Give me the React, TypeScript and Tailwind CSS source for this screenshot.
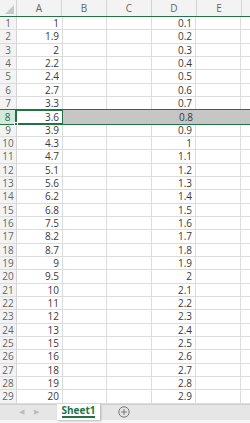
import React from 'react';

const colA = ['1', '1.9', '2', '2.2', '2.4', '2.7', '3.3', '3.6', '3.9', '4.3', '4.7', '5.1', '5.6', '6.2', '6.8', '7.5', '8.2', '8.7', '9', '9.5', '10', '11', '12', '13', '15', '16', '18', '19', '20'];
const colD = ['0.1', '0.2', '0.3', '0.4', '0.5', '0.6', '0.7', '0.8', '0.9', '1', '1.1', '1.2', '1.3', '1.4', '1.5', '1.6', '1.7', '1.8', '1.9', '2', '2.1', '2.2', '2.3', '2.4', '2.5', '2.6', '2.7', '2.8', '2.9'];

const SELECTED = 7;

const App: React.FC = () => {
    return (
        <div className="w-[250px] h-[423px] overflow-hidden bg-white flex flex-col text-[10px] text-[#3a3a3a]" style={{ fontFamily: '"Open Sans", "Liberation Sans", sans-serif' }}>
            {/* column headers */}
            <div className="flex h-[17px] shrink-0 bg-[#f3f3f3] border-b border-[#217346] text-[#666]">
                <div className="w-[17px] shrink-0 border-r border-[#d4d4d4] flex items-end justify-end pr-[2px] pb-[2px]">
                    <svg width="9" height="9" viewBox="0 0 9 9"><polygon points="9,0 9,9 0,9" fill="#c8c8c8" /></svg>
                </div>
                {['A', 'B', 'C', 'D', 'E'].map((c) => (
                    <div key={c} className="w-[45px] shrink-0 border-r border-[#d4d4d4] flex items-center justify-center">{c}</div>
                ))}
                <div className="flex-1" />
            </div>

            {/* rows */}
            <div className="flex flex-col shrink-0">
                {colA.map((a, i) => {
                    const sel = i === SELECTED;
                    return (
                        <div key={i} className={`flex h-[13.34px] ${sel ? 'bg-[#c6c6c6] outline outline-1 outline-[#217346] relative z-10' : 'border-b border-[#dcdcdc]'}`}>
                            <div className={`w-[17px] shrink-0 flex items-center justify-center leading-none ${sel ? 'bg-[#d2e9dc] text-[#217346] border-r-2 border-[#217346]' : 'bg-[#f3f3f3] text-[#666] border-r border-[#d4d4d4]'}`}>{i + 1}</div>
                            <div className={`w-[46px] shrink-0 flex items-center justify-end pr-[3px] leading-none ${sel ? 'bg-white relative border border-l-0 border-[#217346]' : 'border-r border-[#dcdcdc]'}`}>
                                {a}
                                {sel && <div className="absolute left-[-3px] bottom-[-3px] w-[4px] h-[4px] bg-[#217346] border border-white" />}
                            </div>
                            <div className={`w-[44px] shrink-0 ${sel ? '' : 'border-r border-[#dcdcdc]'}`} />
                            <div className={`w-[45px] shrink-0 ${sel ? '' : 'border-r border-[#dcdcdc]'}`} />
                            <div className={`w-[44px] shrink-0 flex items-center justify-end pr-[3px] leading-none ${sel ? '' : 'border-r border-[#dcdcdc]'}`}>{colD[i]}</div>
                            <div className={`w-[45px] shrink-0 ${sel ? '' : 'border-r border-[#dcdcdc]'}`} />
                            <div className="flex-1" />
                        </div>
                    );
                })}
            </div>

            {/* sheet tabs */}
            <div className="flex-1 flex flex-col bg-[#f5f5f5]">
                <div className="h-[16px] flex items-stretch bg-[#e6e6e6] border-t border-[#d0d0d0]">
                    <div className="w-[57px] flex items-center justify-center gap-[10px] text-[#bdbdbd] text-[7px]">
                        <span>◀</span>
                        <span>▶</span>
                    </div>
                    <div className="w-[43px] bg-white flex flex-col items-center justify-center shadow-[1px_1px_2px_rgba(0,0,0,0.25)] -mt-px">
                        <span className="font-bold text-[#217346] text-[10px] leading-none border-b-2 border-[#217346] pb-[1px]">Sheet1</span>
                    </div>
                    <div className="w-[48px] flex items-center justify-center">
                        <svg width="12" height="12" viewBox="0 0 12 12" fill="none" stroke="#777" strokeWidth="1">
                            <circle cx="6" cy="6" r="5.2" />
                            <line x1="6" y1="3" x2="6" y2="9" />
                            <line x1="3" y1="6" x2="9" y2="6" />
                        </svg>
                    </div>
                </div>
            </div>
        </div>
    );
};

export default App;
